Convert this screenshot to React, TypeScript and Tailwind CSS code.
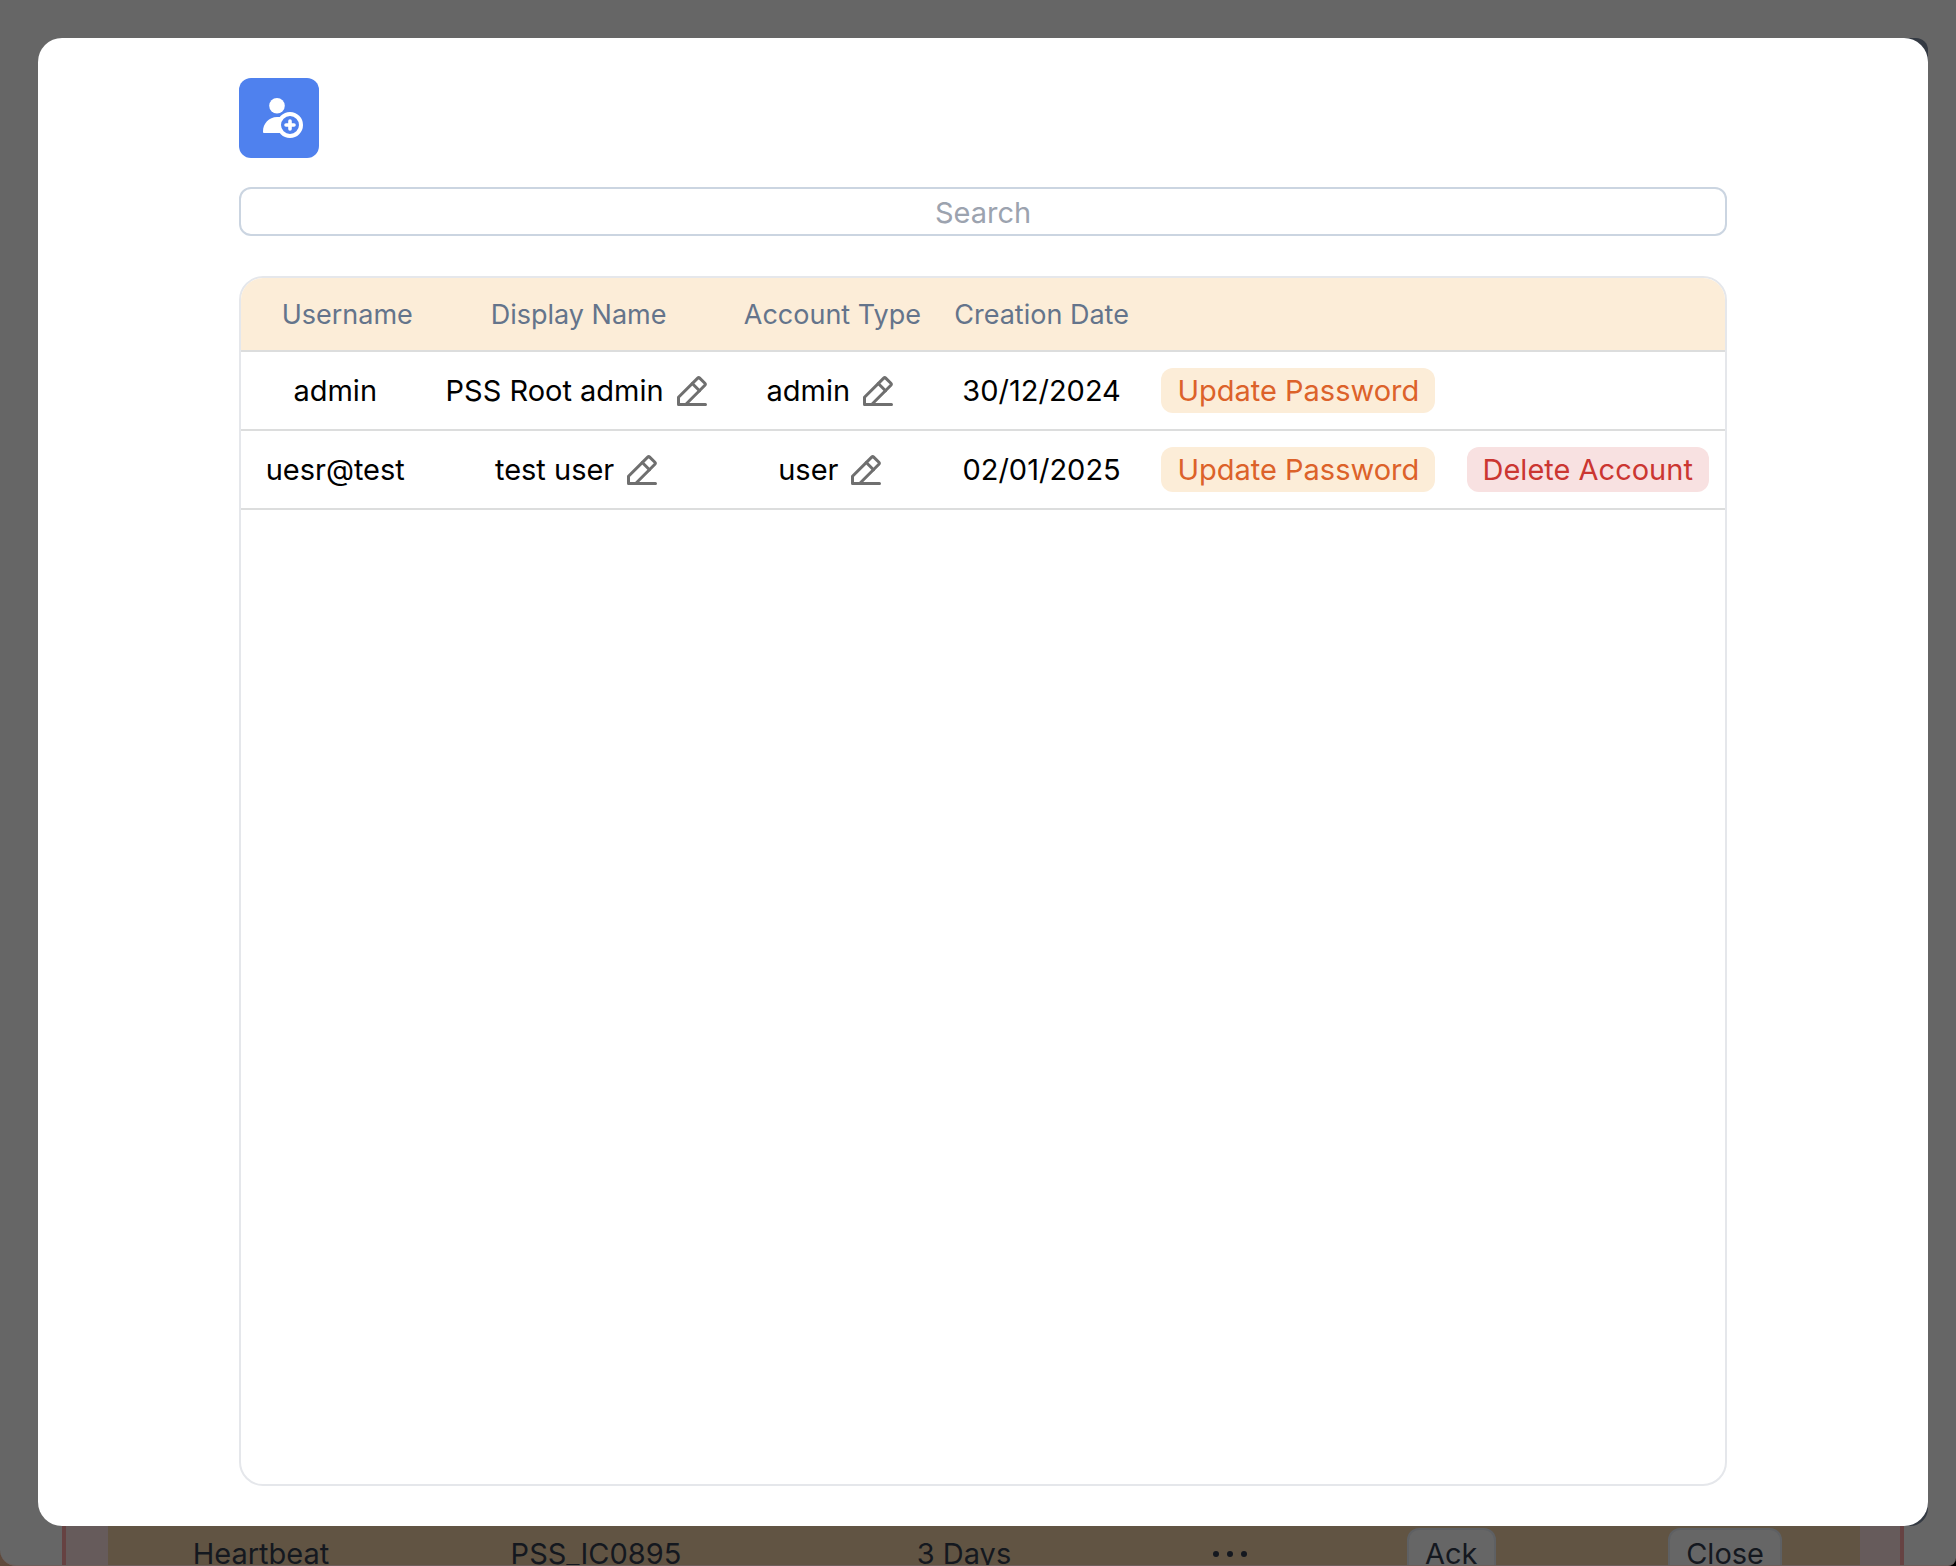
import { useState } from "react";

type Account = {
  username: string;
  displayName: string;
  type: string;
  created: string;
  removable: boolean;
};

const accounts: Account[] = [
  { username: "admin", displayName: "PSS Root admin", type: "admin", created: "30/12/2024", removable: false },
  { username: "uesr@test", displayName: "test user", type: "user", created: "02/01/2025", removable: true },
];

function AddUserIcon() {
  return (
    <svg viewBox="0 0 40 40" className="size-10" aria-hidden="true">
      <circle cx="14" cy="7.8" r="7.8" fill="#fff" />
      <path d="M14 19C6 19 0 25.500 0 33.500C0 34.500 .4 35 1.300 35H20L26 19.500C22 18.600 18 19 14 19Z" fill="#fff" />
      <circle cx="27" cy="27" r="11" fill="#4f81ee" stroke="#fff" strokeWidth="4" />
      <path d="M27 23V31M23 27H31" stroke="#fff" strokeWidth="3.600" strokeLinecap="round" />
    </svg>
  );
}

function PencilIcon() {
  return (
    <svg
      viewBox="0 0 40 40"
      className="size-10"
      fill="none"
      stroke="currentColor"
      strokeWidth="3"
      strokeLinecap="round"
      strokeLinejoin="round"
      aria-hidden="true"
    >
      <path d="M33.500 33.500H6.500V26.200L25.700 7.100Q26.700 6.100 27.700 7.100L32.900 12.300Q33.900 13.300 32.900 14.300L13.700 33.500" />
      <path d="M20.300 12.500L27.500 19.700" />
    </svg>
  );
}

function Editable({ text, label }: { text: string; label: string }) {
  return (
    <div className="flex items-center justify-center gap-2">
      <span>{text}</span>
      <button type="button" aria-label={label} className="text-[#6f6f6f]">
        <PencilIcon />
      </button>
    </div>
  );
}

export default function App() {
  const [query, setQuery] = useState("");
  const rows = accounts.filter((a) => a.username.includes(query) || a.displayName.includes(query));

  return (
    <div className="h-screen bg-linear-to-r from-[#5f4a3c] to-black">
      <div className="flex h-full flex-col overflow-hidden rounded-br-lg rounded-bl-2xl border-b border-[#6e5f5c] bg-[#666666] pt-[38px] font-['Inter',sans-serif] text-[29px] text-black">
        <div className="mr-7 ml-[38px] flex min-h-0 flex-1 rounded-l-[28px] rounded-tr-xl rounded-br-[18px] bg-[#343a43]">
          <main className="flex min-w-0 flex-1 flex-col rounded-3xl bg-white px-[201px] py-10">
            <button
              type="button"
              aria-label="Add user"
              className="flex size-20 shrink-0 items-center justify-center rounded-xl bg-[#4f81ee] pl-2"
            >
              <AddUserIcon />
            </button>
            <input
              aria-label="Search"
              placeholder="Search"
              value={query}
              onChange={(e) => setQuery(e.target.value)}
              className="mt-[29px] h-[49px] w-full shrink-0 rounded-xl border-2 border-[#cbd5e1] pt-[2px] text-center outline-none placeholder:text-[#9ca3af]"
            />
            <div className="mt-10 min-h-0 flex-1 overflow-hidden rounded-3xl border-2 border-[#e5e7eb]">
              <table className="w-full table-fixed border-separate border-spacing-0 text-center">
                <colgroup>
                  <col className="w-[12.7%]" />
                  <col className="w-[20.1%]" />
                  <col className="w-[14.1%]" />
                  <col className="w-[14.1%]" />
                  <col className="w-[20.5%]" />
                  <col className="w-[18.5%]" />
                </colgroup>
                <thead>
                  <tr className="h-[74px] bg-[#fcedd8] text-[27px] text-[#64748b] [&>th]:border-b-2 [&>th]:border-[#dcdddd] [&>th]:pt-[2px] [&>th]:font-normal">
                    <th className="pl-6">Username</th>
                    <th>Display Name</th>
                    <th>Account Type</th>
                    <th>Creation Date</th>
                    <th />
                    <th />
                  </tr>
                </thead>
                <tbody>
                  {rows.map((a) => (
                    <tr key={a.username} className="h-[79px] whitespace-nowrap [&>td]:border-b-2 [&>td]:border-[#dcdddd]">
                      <td>{a.username}</td>
                      <td>
                        <Editable text={a.displayName} label={`Edit display name of ${a.username}`} />
                      </td>
                      <td>
                        <Editable text={a.type} label={`Edit account type of ${a.username}`} />
                      </td>
                      <td>{a.created}</td>
                      <td>
                        <button type="button" className="h-[45px] rounded-xl bg-[#fcedd8] px-4 text-[#dc622a]">
                          Update Password
                        </button>
                      </td>
                      <td>
                        {a.removable && (
                          <button type="button" className="h-[45px] rounded-xl bg-[#f8e1e1] px-4 text-[#cb3631]">
                            Delete Account
                          </button>
                        )}
                      </td>
                    </tr>
                  ))}
                </tbody>
              </table>
            </div>
          </main>
        </div>
        <div className="mr-[52px] ml-[62px] h-[39px] shrink-0 overflow-hidden border-x-4 border-[#664242] bg-[#665b5b] pr-10 pl-[42px] text-[#14181f]">
          <div className="flex h-full items-start bg-[#615443] pt-[2px] pr-[78px] leading-[52px]">
            <span className="w-[306px] text-center">Heartbeat</span>
            <span className="w-[364px] text-center">PSS_IC0895</span>
            <span className="w-[372px] text-center">3 Days</span>
            <button type="button" aria-label="More" className="flex h-[52px] w-[160px] items-center justify-center gap-2">
              <span className="size-[6px] rounded-full bg-[#14181f]" />
              <span className="size-[6px] rounded-full bg-[#14181f]" />
              <span className="size-[6px] rounded-full bg-[#14181f]" />
            </button>
            <div className="flex flex-1 justify-between pl-[97px]">
              <button type="button" className="h-[52px] rounded-xl border-2 border-[#5e6063] bg-[#666666] px-4 leading-[48px]">
                Ack
              </button>
              <button type="button" className="h-[52px] rounded-xl border-2 border-[#5e6063] bg-[#666666] px-4 leading-[48px]">
                Close
              </button>
            </div>
          </div>
        </div>
      </div>
    </div>
  );
}
